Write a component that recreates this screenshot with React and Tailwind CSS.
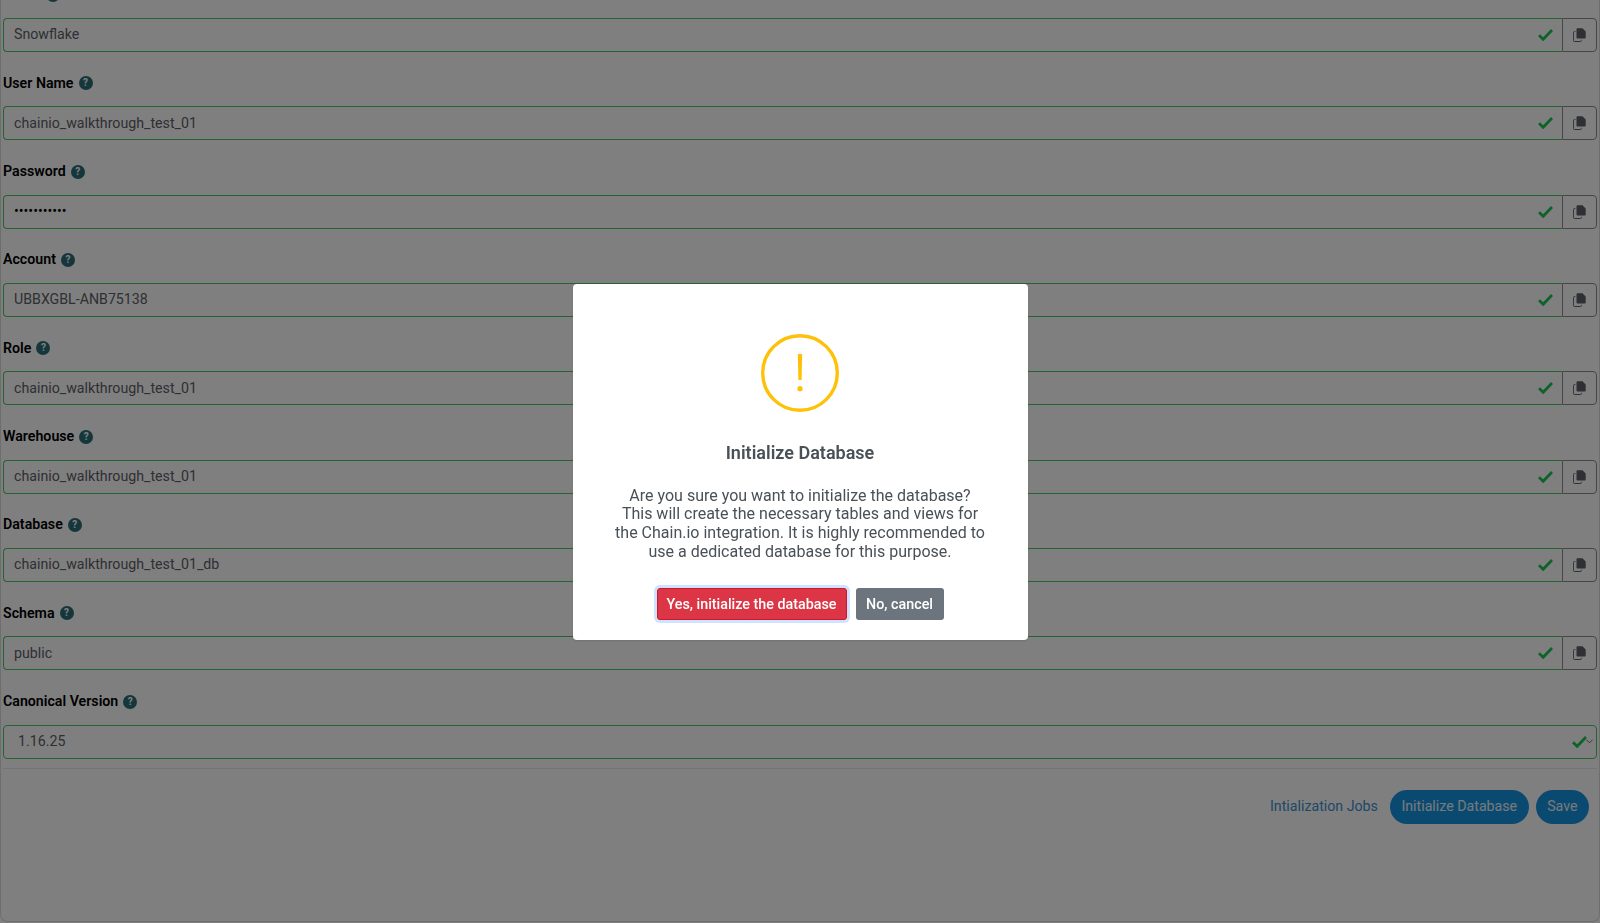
import { useState } from 'react';

const fields = [
  { label: 'Name', value: 'Snowflake' },
  { label: 'User Name', value: 'chainio_walkthrough_test_01' },
  { label: 'Password', value: '•••••••••••', password: true },
  { label: 'Account', value: 'UBBXGBL-ANB75138' },
  { label: 'Role', value: 'chainio_walkthrough_test_01' },
  { label: 'Warehouse', value: 'chainio_walkthrough_test_01' },
  { label: 'Database', value: 'chainio_walkthrough_test_01_db' },
  { label: 'Schema', value: 'public' },
];

function HelpIcon() {
  return (
    <span className="ml-[5px] flex h-[14px] w-[14px] items-center justify-center rounded-full bg-[#2a6f76] text-[10px] font-bold leading-none text-white">
      ?
    </span>
  );
}

function Check() {
  return (
    <svg viewBox="0 0 15 12" className="h-[12px] w-[15px]" fill="none" stroke="#1cc454" strokeWidth="2.8">
      <path d="M1 6.2 L5.2 10.3 L14 1" />
    </svg>
  );
}

function CopyIcon() {
  return (
    <svg viewBox="0 0 13 14" className="h-[14px] w-[13px]">
      <path d="M4.5 0.3h5l3.2 3.2v6a1 1 0 0 1-1 1H4.5a1 1 0 0 1-1-1V1.3a1 1 0 0 1 1-1z" fill="#5c6066" />
      <path d="M2.4 3.6H1.4a1 1 0 0 0-1 1v7.9a1 1 0 0 0 1 1h6a1 1 0 0 0 1-1v-.7" fill="none" stroke="#5c6066" strokeWidth="1" />
    </svg>
  );
}

function Field({ field }) {
  return (
    <div className="mb-[21.33px]">
      <label className="flex h-[20px] items-center text-[14.2px] font-semibold text-black">
        {field.label}
        <HelpIcon />
      </label>
      <div className="mt-[13px] flex h-[34px]">
        <div className="flex min-w-0 flex-1 items-center rounded-l border border-r-0 border-[#48c868] pl-[10px] pr-[9px]">
          <span className={field.password ? 'flex-1 text-[14.2px] text-black' : 'flex-1 text-[14.2px] text-[#5c6066]'}>{field.value}</span>
          <Check />
        </div>
        <button className="flex w-[35px] items-center justify-center rounded-r border border-[#8a8d91]">
          <CopyIcon />
        </button>
      </div>
    </div>
  );
}

export default function App() {
  const [open] = useState(true);

  return (
    <div className="relative h-[923px] w-[1600px] overflow-hidden bg-white font-['Roboto',sans-serif]">
      <div className="h-[922px] w-full overflow-hidden rounded-b-lg border border-t-0 border-[#dddddd] pl-[2px] pr-[2px]">
        <div className="mt-[-15px]">
          {fields.map((f) => (
            <Field key={f.label} field={f} />
          ))}
          <div>
            <label className="flex h-[20px] items-center text-[14.2px] font-semibold text-black">
              Canonical Version
              <HelpIcon />
            </label>
            <div className="mt-[13px] flex h-[34px] items-center rounded border border-[#48c868] pl-[14px] pr-[3px]">
              <span className="flex-1 text-[14.2px] text-[#5c6066]">1.16.25</span>
              <Check />
              <svg viewBox="0 0 8 5" className="ml-[-1px] h-[5px] w-[7px]" fill="none" stroke="#5c6066" strokeWidth="1">
                <path d="M0.5 0.5 L4 4 L7.5 0.5" />
              </svg>
            </div>
          </div>
          <div className="mt-[9px] border-t border-[#e8e8e8]" />
          <div className="mt-[21px] flex items-center justify-end pr-[8px]">
            <a className="mr-[12px] text-[14.2px] text-[#3d8fd0]">Intialization Jobs</a>
            <button className="h-[34px] rounded-full bg-[#1694e0] px-[11.5px] text-[14.2px] text-[#eef4f8]">Initialize Database</button>
            <button className="ml-[7px] h-[34px] rounded-full bg-[#1694e0] px-[11.5px] text-[14.2px] text-[#eef4f8]">Save</button>
          </div>
        </div>
      </div>

      {open && (
        <div className="fixed inset-0 flex items-center justify-center bg-black/50">
          <div className="flex h-[356px] w-[455px] flex-col items-center rounded bg-white pt-[50px] shadow">
            <svg viewBox="0 0 78 78" className="h-[78px] w-[78px]">
              <circle cx="39" cy="39" r="37.3" fill="none" stroke="#ffc107" strokeWidth="3.4" />
              <path d="M36.8 20h4.4l-0.6 26h-3.2z" fill="#ffc107" />
              <circle cx="39" cy="54.7" r="2.6" fill="#ffc107" />
            </svg>
            <h2 className="mt-[30px] text-lg font-semibold leading-[21px] text-[#495057]">Initialize Database</h2>
            <p className="mt-[24px] w-[374px] text-center text-base leading-[18.7px] text-[#495057]">
              Are you sure you want to initialize the database? This will create the necessary tables and views for the Chain.io integration. It is highly recommended to use a dedicated database for this purpose.
            </p>
            <div className="mt-[27px] flex gap-[9px]">
              <button className="h-[32px] w-[190px] rounded-[3px] border border-[#c9182b] bg-[#dc3545] text-[14.3px] font-medium text-white ring-[3px] ring-[#cfe2ff]">
                Yes, initialize the database
              </button>
              <button className="h-[32px] w-[88px] rounded-[3px] bg-[#6c757d] text-[14.3px] font-medium text-white">No, cancel</button>
            </div>
          </div>
        </div>
      )}
    </div>
  );
}
